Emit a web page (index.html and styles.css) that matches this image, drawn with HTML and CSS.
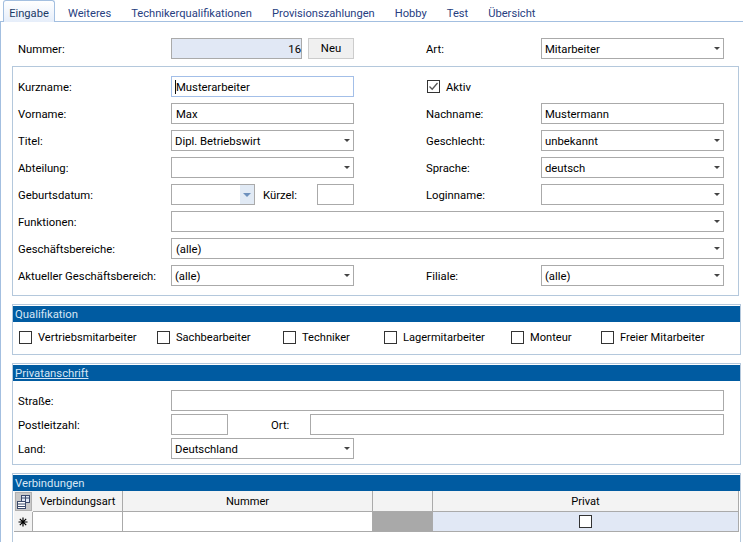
FILE: index.html
```html
<!DOCTYPE html>
<html>
<head>
    <title>Mitarbeiter</title>
    <link rel="stylesheet" href="styles.css">
</head>
<body>
    <div class="tabs">
        <div class="tab active">Eingabe</div>
        <div class="tab">Weiteres</div>
        <div class="tab">Technikerqualifikationen</div>
        <div class="tab">Provisionszahlungen</div>
        <div class="tab">Hobby</div>
        <div class="tab">Test</div>
        <div class="tab">Übersicht</div>
    </div>

    <div class="panel">
        <div class="form-grid top-row">
            <div class="label">Nummer:</div>
            <div class="number-cell">
                <div class="field readonly">16</div>
                <div class="btn">Neu</div>
            </div>
            <div class="label col-4">Art:</div>
            <div class="field combo">Mitarbeiter</div>
        </div>

        <div class="box main-box">
            <div class="form-grid rows-wide">
                <div class="label">Kurzname:</div>
                <div class="field focused"><span class="caret"></span>Musterarbeiter</div>
                <div class="check-row col-4 span-2">
                    <span class="check"><svg width="11" height="11" viewBox="0 0 11 11"><path d="M1.5 5.5 L4.2 8.2 L9.5 2" fill="none" stroke="#555" stroke-width="1.3"/></svg></span>
                    <span class="check-text">Aktiv</span>
                </div>

                <div class="label">Vorname:</div>
                <div class="field inset">Max</div>
                <div class="label col-4">Nachname:</div>
                <div class="field">Mustermann</div>

                <div class="label">Titel:</div>
                <div class="field combo">Dipl. Betriebswirt</div>
                <div class="label col-4">Geschlecht:</div>
                <div class="field combo">unbekannt</div>

                <div class="label">Abteilung:</div>
                <div class="field combo"></div>
                <div class="label col-4">Sprache:</div>
                <div class="field combo">deutsch</div>

                <div class="label">Geburtsdatum:</div>
                <div class="date-cell">
                    <div class="field date"><span class="date-btn"></span></div>
                    <div class="label">Kürzel:</div>
                    <div class="field short"></div>
                </div>
                <div class="label col-4">Loginname:</div>
                <div class="field combo"></div>

                <div class="label">Funktionen:</div>
                <div class="field combo span-4"></div>

                <div class="label">Geschäftsbereiche:</div>
                <div class="field combo inset span-4">(alle)</div>

                <div class="label">Aktueller Geschäftsbereich:</div>
                <div class="field combo">(alle)</div>
                <div class="label col-4">Filiale:</div>
                <div class="field combo">(alle)</div>
            </div>
        </div>

        <div class="box section">
            <div class="section-head">Qualifikation</div>
            <div class="quali-row">
                <div class="check-row"><span class="check"></span><span>Vertriebsmitarbeiter</span></div>
                <div class="check-row"><span class="check"></span><span>Sachbearbeiter</span></div>
                <div class="check-row"><span class="check"></span><span>Techniker</span></div>
                <div class="check-row"><span class="check"></span><span>Lagermitarbeiter</span></div>
                <div class="check-row"><span class="check"></span><span>Monteur</span></div>
                <div class="check-row"><span class="check"></span><span>Freier Mitarbeiter</span></div>
            </div>
        </div>

        <div class="box section">
            <div class="section-head link">Privatanschrift</div>
            <div class="form-grid rows-tight">
                <div class="label">Straße:</div>
                <div class="field span-4"></div>

                <div class="label">Postleitzahl:</div>
                <div class="plz-cell span-4">
                    <div class="field plz"></div>
                    <div class="label ort-label">Ort:</div>
                    <div class="field ort"></div>
                </div>

                <div class="label">Land:</div>
                <div class="field combo">Deutschland</div>
            </div>
        </div>

        <div class="box section last">
            <div class="section-head">Verbindungen</div>
            <div class="grid-table">
                <div class="cell head corner">
                    <svg width="17" height="19" viewBox="0 0 17 19">
                        <rect x="0.5" y="0.5" width="16" height="18" fill="#c9c9c9" stroke="#b0b0b0"/>
                        <rect x="6.5" y="3.5" width="8" height="7" fill="#e1e8f5" stroke="#3b4a6b"/>
                        <path d="M6.5 6 H14.5 M10.5 3.5 V10.5" stroke="#3b4a6b" fill="none"/>
                        <rect x="2.5" y="9.5" width="8" height="7" fill="#fff" stroke="#3b4a6b"/>
                        <path d="M2.5 12 H10.5 M2.5 14.5 H10.5" stroke="#3b4a6b" fill="none"/>
                    </svg>
                </div>
                <div class="cell head">Verbindungsart</div>
                <div class="cell head">Nummer</div>
                <div class="cell head"></div>
                <div class="cell head">Privat</div>

                <div class="cell row-head">
                    <svg width="10" height="10" viewBox="0 0 10 10">
                        <path d="M5 0.5 V9.5 M0.5 5 H9.5 M1.8 1.8 L8.2 8.2 M1.8 8.2 L8.2 1.8" stroke="#000" stroke-width="1.2" fill="none"/>
                    </svg>
                </div>
                <div class="cell"></div>
                <div class="cell"></div>
                <div class="cell blocked"></div>
                <div class="cell tinted"><span class="check"></span></div>
            </div>
        </div>
    </div>
</body>
</html>
```

FILE: styles.css
```css
html, body {
    margin: 0;
    height: 100%;
    overflow: hidden;
}
body {
    background: #fff;
    color: #000;
    font-family: Roboto, 'Liberation Sans', sans-serif;
    font-size: 11.3px;
    height: 542px;
}
.tabs {
    display: flex;
    height: 21px;
    padding-left: 3px;
    border-bottom: 1px solid #a3bfe0;
    font-size: 11.15px;
}
.tab {
    padding: 0 10px;
    line-height: 28px;
    color: #27407f;
}
.tab.active {
    box-sizing: border-box;
    color: #1b3a66;
    height: 22px;
    width: 52px;
    padding: 0;
    margin-right: 3px;
    text-align: center;
    border: 1px solid #a3bfe0;
    border-bottom: none;
    border-radius: 3px 3px 0 0;
    background: linear-gradient(#fff, #e6eefa);
    line-height: 26px;
}
.panel {
    border-left: 1px solid #a3bfe0;
    padding: 16px 0 0 11px;
    height: 504px;
}
.form-grid {
    display: grid;
    grid-template-columns: 153px 183px 72px 115px 183px;
    grid-auto-rows: 21px;
    align-items: center;
    padding-left: 5px;
}
.top-row {
    padding-left: 6px;
}
.rows-wide {
    row-gap: 6px;
    padding-top: 9px;
    padding-bottom: 9px;
}
.rows-tight {
    row-gap: 3px;
    padding-top: 9px;
    padding-bottom: 5px;
}
.col-4 {
    grid-column-start: 3;
    padding-left: 72px;
}
.label.col-4 {
    grid-column: 3 / span 2;
}
.check-row.col-4 {
    padding-left: 73px;
}
.span-2 {
    grid-column: 3 / span 3;
}
.span-4 {
    grid-column: 2 / span 4;
}
.label {
    white-space: nowrap;
    padding-top: 1px;
}
.field {
    box-sizing: border-box;
    height: 21px;
    line-height: 21px;
    border: 1px solid #aaa;
    padding-left: 3px;
    position: relative;
    background: #fff;
    white-space: nowrap;
}
.inset {
    padding-left: 4px;
}
.field.focused {
    border-color: #a3bfe8;
    padding-left: 4px;
}
.caret {
    position: absolute;
    left: 3px;
    top: 3px;
    width: 1px;
    height: 14px;
    background: #111;
}
.combo::after {
    content: '';
    position: absolute;
    right: 3px;
    top: 8px;
    border-left: 3px solid transparent;
    border-right: 3px solid transparent;
    border-top: 3px solid #444;
}
.number-cell {
    display: flex;
    justify-content: space-between;
}
.readonly {
    width: 131px;
    background: #e1e8f5;
    text-align: right;
    padding-right: 0;
}
.btn {
    box-sizing: border-box;
    width: 46px;
    height: 21px;
    line-height: 20px;
    text-align: center;
    background: #f0f0f0;
    border: 1px solid #ccc;
}
.date-cell {
    display: flex;
    align-items: center;
}
.date {
    width: 84px;
    margin-right: 8px;
}
.date-btn {
    position: absolute;
    right: 0;
    top: 0;
    bottom: 0;
    width: 14px;
    background: #e1eaf5;
}
.date-btn::after {
    content: '';
    position: absolute;
    left: 3px;
    top: 8px;
    border-left: 4px solid transparent;
    border-right: 4px solid transparent;
    border-top: 4px solid #6d90bd;
}
.short {
    width: 37px;
    margin-left: auto;
}
.plz-cell {
    display: flex;
    align-items: center;
}
.plz {
    width: 57px;
}
.ort-label {
    margin-left: 43px;
    width: 39px;
}
.ort {
    width: 414px;
}
.box {
    border: 1px solid #b4c8dc;
    box-sizing: border-box;
    background: #fff;
}
.main-box {
    width: 727px;
    margin-top: 7px;
}
.section {
    width: 729px;
    margin-top: 8px;
    padding-top: 1px;
}
.section-head {
    height: 16px;
    line-height: 18px;
    padding-left: 2px;
    background: #005ba1;
    color: #d6e6f5;
}
.section-head.link {
    text-decoration: underline;
}
.check-row {
    display: flex;
    align-items: center;
    gap: 6px;
    white-space: nowrap;
}
.check-text {
    padding-top: 2px;
}
.check {
    box-sizing: border-box;
    display: block;
    flex: none;
    width: 13px;
    height: 13px;
    border: 1px solid #333;
    background: #fff;
}
.quali-row {
    display: grid;
    grid-template-columns: 138px 126px 101px 127px 90px auto;
    grid-auto-rows: 13px;
    padding: 9px 0 10px 6px;
    font-size: 11.1px;
}
.last {
    height: 80px;
}
.grid-table {
    display: grid;
    grid-template-columns: 19px 90px 250px 60px 306px;
    grid-template-rows: 21px 20px;
    margin-left: 1px;
    font-size: 11.1px;
}
.cell {
    box-sizing: border-box;
    display: flex;
    align-items: center;
    justify-content: center;
    border-right: 1px solid #aaa;
    border-bottom: 1px solid #aaa;
    background: #fff;
}
.head {
    background: #f3f3f3;
}
.corner {
    border-right: none;
    border-bottom: none;
}
.row-head {
    background: #f3f3f3;
}
.blocked {
    background: #a9a9a9;
}
.tinted {
    background: #e1e8f5;
}
```
